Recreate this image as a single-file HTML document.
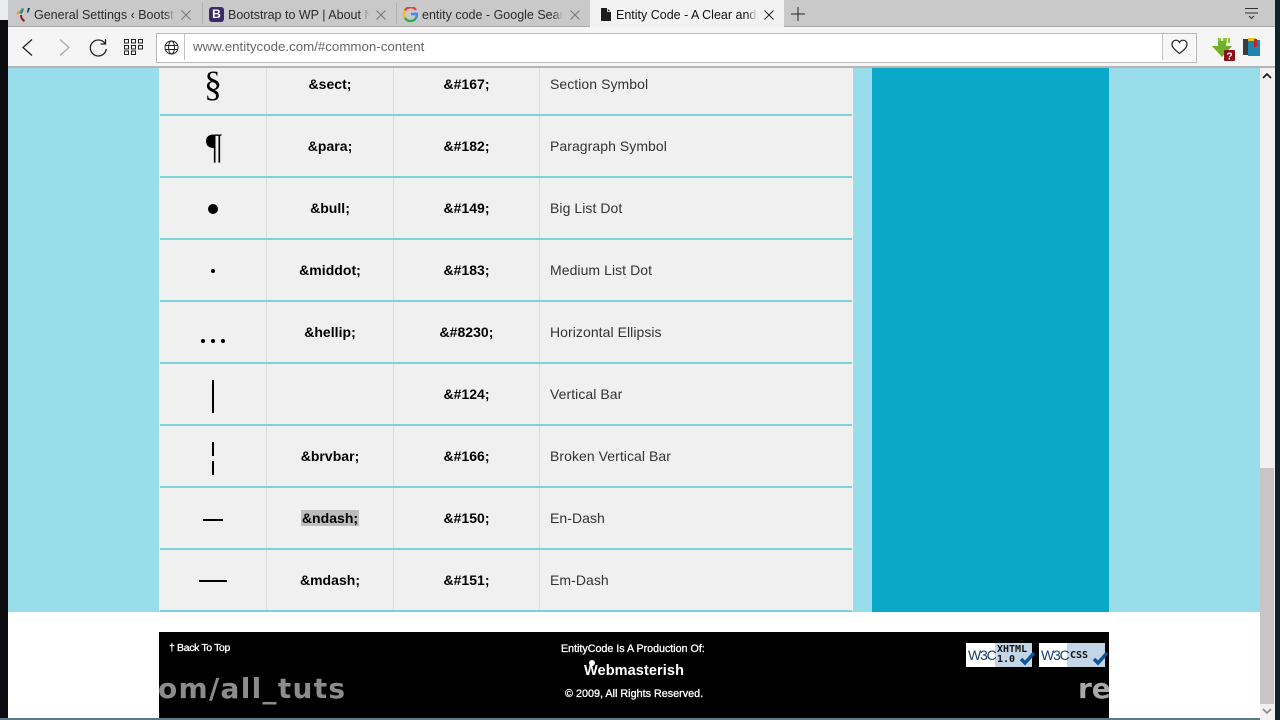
<!DOCTYPE html>
<html><head><meta charset="utf-8"><style>
html,body{margin:0;padding:0;background:#fff;width:1280px;height:720px;overflow:hidden;font-family:"Liberation Sans",sans-serif}
.a{position:absolute}
.t{position:absolute;white-space:nowrap}
.tab{position:absolute;top:0;height:28px;background:#c9c9c9}
.tt{position:absolute;top:7px;font-size:12.5px;line-height:16px;color:#2b2b2b;white-space:nowrap;overflow:hidden}
.fade{position:absolute;top:4px;width:10px;height:22px;background:linear-gradient(90deg,rgba(201,201,201,0),#c9c9c9)}
.b{position:absolute;font-weight:bold;font-size:14px;line-height:16px;color:#000;text-align:center;white-space:nowrap;letter-spacing:.03px}
.d{position:absolute;font-size:14px;line-height:16px;color:#333;left:550px;white-space:nowrap;letter-spacing:.06px}
.hl{position:absolute;left:160px;width:692px;height:2px;background:#7dd3dc}
.vl{position:absolute;top:68px;width:1px;height:543px;background:#dcdcdc}
.ft{position:absolute;color:#fff;font-size:10.7px;line-height:12px;white-space:nowrap;-webkit-text-stroke:.3px #fff}
</style></head><body>
<div class="a" style="left:0;top:0;width:1280px;height:720px;background:#fff"></div>
<div class="a" style="left:0;top:20px;width:8px;height:700px;background:#0c0c10"></div>
<div class="a" style="left:1275px;top:0;width:5px;height:720px;background:#10222a"></div>
<div class="a" style="left:0;top:0;width:8px;height:20px;background:#e8eef0"></div>
<!-- tab strip -->
<div class="a" style="left:8px;top:0;width:1267px;height:27px;background:#c9c9c9"></div>
<div class="a" style="left:8px;top:26px;width:1267px;height:1px;background:#a8a8a8"></div>
<div class="a" style="left:202px;top:3px;width:1px;height:21px;background:#b0b0b0"></div>
<div class="a" style="left:396px;top:3px;width:1px;height:21px;background:#b0b0b0"></div>
<div class="a" style="left:590px;top:0;width:194px;height:28px;background:#f2f2f2"></div>
<!-- favicons -->
<svg class="a" style="left:14px;top:5px" width="20" height="20" viewBox="0 0 20 20"><path d="M5 5 2 9l2 1 2-3z" fill="#e8a33c"/><path d="M8 3 5 8l3 1 2-5z" fill="#2a8a7a"/><path d="M6 10c0 3 1 5 4 7l1-2c-2-1-3-3-3-5z" fill="#8e1f2a"/><path d="M14 3l2 0-2 5-1-1z" fill="#16324f"/></svg>
<div class="a" style="left:209px;top:7px;width:15px;height:15px;border-radius:3px;background:#3d2a68;color:#fff;font:bold 12px/15px 'Liberation Sans',sans-serif;text-align:center">B</div>
<svg class="a" style="left:403px;top:7px" width="15" height="15" viewBox="0 0 15 15"><path d="M13 3A6.5 6.5 0 0 0 2 3.5" fill="none" stroke="#e94235" stroke-width="2.4"/><path d="M2 3.5A6.5 6.5 0 0 0 2 11" fill="none" stroke="#fbbc05" stroke-width="2.4"/><path d="M2 11A6.5 6.5 0 0 0 13 11" fill="none" stroke="#34a853" stroke-width="2.4"/><path d="M13 11C14 9.5 14 8.500 14 7H8" fill="none" stroke="#4285f4" stroke-width="2.4"/></svg>
<svg class="a" style="left:600px;top:8px" width="12" height="13" viewBox="0 0 12 13"><path d="M1 0h6l4 4v9H1z" fill="#1b1b1b"/><path d="M7.500 0v3.500H11" fill="none" stroke="#fff" stroke-width=".8"/></svg>
<!-- tab titles -->
<div class="tt" style="left:34px;width:141px">General Settings ‹ Bootstrap to WP</div><div class="fade" style="left:165px"></div>
<div class="tt" style="left:228px;width:141px">Bootstrap to WP | About Me</div><div class="fade" style="left:359px"></div>
<div class="tt" style="left:422px;width:141px">entity code - Google Search</div><div class="fade" style="left:553px"></div>
<div class="tt" style="left:616px;width:141px;color:#111">Entity Code - A Clear and Quick</div><div class="fade" style="left:747px;background:linear-gradient(90deg,rgba(242,242,242,0),#f2f2f2)"></div>
<!-- tab close -->
<svg class="a" style="left:180px;top:9px" width="12" height="12"><path d="M1.500 1.500l9 9M10.500 1.500l-9 9" stroke="#777" stroke-width="1" fill="none"/></svg>
<svg class="a" style="left:375px;top:9px" width="12" height="12"><path d="M1.500 1.500l9 9M10.500 1.500l-9 9" stroke="#777" stroke-width="1" fill="none"/></svg>
<svg class="a" style="left:569px;top:9px" width="12" height="12"><path d="M1.500 1.500l9 9M10.500 1.500l-9 9" stroke="#777" stroke-width="1" fill="none"/></svg>
<svg class="a" style="left:763px;top:9px" width="12" height="12"><path d="M1.500 1.500l9 9M10.500 1.500l-9 9" stroke="#222" stroke-width="1" fill="none"/></svg>
<svg class="a" style="left:791px;top:7px" width="14" height="14"><path d="M7 0v14M0 7h14" stroke="#222" stroke-width="1" fill="none"/></svg>
<svg class="a" style="left:1245px;top:7px" width="14" height="14"><path d="M0 1.500h13M0 6h13" stroke="#333" stroke-width="1" fill="none"/><path d="M4 9l2.500 2.500L9 9" stroke="#333" stroke-width="1" fill="none"/></svg>
<!-- toolbar -->
<div class="a" style="left:8px;top:27px;width:1267px;height:40px;background:#f5f5f5"></div>
<div class="a" style="left:8px;top:66px;width:1267px;height:2px;background:#b5b5b5"></div>
<svg class="a" style="left:20px;top:38px" width="14" height="19"><path d="M12 1.500 3 9.500l9 8" fill="none" stroke="#222" stroke-width="1.300"/></svg>
<svg class="a" style="left:58px;top:38px" width="14" height="19"><path d="M2 1.500l9 8-9 8" fill="none" stroke="#aaa" stroke-width="1.300"/></svg>
<svg class="a" style="left:89px;top:38px" width="19" height="19" viewBox="0 0 19 19"><path d="M16 5.500A8 8 0 1 0 17.300 11" fill="none" stroke="#222" stroke-width="1.300"/><path d="M16.500 1v5h-5" fill="none" stroke="#222" stroke-width="1.300"/></svg>
<svg class="a" style="left:124px;top:39px" width="19" height="16" fill="none" stroke="#222" stroke-width="1"><rect x=".5" y=".5" width="4" height="3.500"/><rect x="7.500" y=".5" width="4" height="3.500"/><rect x="14.500" y=".5" width="4" height="3.500"/><rect x=".5" y="6.500" width="4" height="3.500"/><rect x="7.500" y="6.500" width="4" height="3.500"/><rect x="14.500" y="6.500" width="4" height="3.500"/><rect x=".5" y="12" width="4" height="3.500"/><rect x="7.500" y="12" width="4" height="3.500"/></svg>
<div class="a" style="left:156px;top:33px;width:1039px;height:28px;background:#fff;border:1px solid #b8b8b8;box-sizing:content-box"></div>
<div class="a" style="left:184px;top:34px;width:1px;height:26px;background:#c4c4c4"></div>
<div class="a" style="left:1162px;top:34px;width:1px;height:26px;background:#c4c4c4"></div>
<div class="a" style="left:1163px;top:34px;width:32px;height:27px;background:#f7f7f7"></div>
<svg class="a" style="left:164px;top:40px" width="15" height="15" viewBox="0 0 15 15" fill="none" stroke="#222" stroke-width="1"><circle cx="7.500" cy="7.500" r="6.500"/><ellipse cx="7.500" cy="7.500" rx="3" ry="6.500"/><path d="M1 5.500h13M1 9.500h13"/></svg>
<div class="t" style="left:193px;top:39px;font-size:13.300px;line-height:16px;color:#666">www.entitycode.com/#common-content</div>
<svg class="a" style="left:1171px;top:39px" width="17" height="16" viewBox="0 0 17 16"><path d="M8.500 14.500C5 11.500 1 9 1 5.200 1 2.800 3 1.200 4.800 1.200c1.700 0 3 1 3.700 2.300.7-1.300 2-2.300 3.700-2.300C14 1.200 16 2.800 16 5.200c0 3.800-4 6.300-7.500 9.300z" fill="#fff" stroke="#222" stroke-width="1.200"/></svg>
<svg class="a" style="left:1212px;top:37px" width="26" height="25" viewBox="0 0 26 25"><path d="M6 1h3v5H6zM11 1h4v5h-4zM16 1h2v5h-2z" fill="#8cc63a"/><path d="M0 9h6V4h8v5h6L10 20z" fill="#6fb028"/><rect x="12" y="13" width="11" height="11" rx="1" fill="#8c0f1a"/><text x="17.500" y="22.500" font-family="Liberation Sans" font-weight="bold" font-size="10" fill="#fff" text-anchor="middle">?</text></svg>
<svg class="a" style="left:1243px;top:37px" width="18" height="20" viewBox="0 0 18 20"><rect x="0" y="2" width="6" height="16" fill="#3c3c3c"/><rect x="5" y="3" width="12" height="16" fill="#1b86b0"/><rect x="5" y="1" width="8" height="3" fill="#e8c020"/><rect x="11" y="2" width="3" height="8" fill="#c02525"/></svg>
<!-- page -->
<div class="a" style="left:8px;top:68px;width:1253px;height:544px;background:#98dde9"></div>
<div class="a" style="left:872px;top:68px;width:237px;height:544px;background:#0aa9c9"></div>
<div class="a" style="left:160px;top:68px;width:692px;height:543px;background:#f0f0f0"></div>
<div class="a" style="left:159px;top:68px;width:1px;height:543px;background:#f4f4f4"></div>
<div class="a" style="left:852px;top:68px;width:1px;height:543px;background:#f4f4f4"></div>
<div class="vl" style="left:266px"></div><div class="vl" style="left:393px"></div><div class="vl" style="left:539px"></div>
<div class="hl" style="top:114px"></div><div class="hl" style="top:176px"></div><div class="hl" style="top:238px"></div><div class="hl" style="top:300px"></div><div class="hl" style="top:362px"></div><div class="hl" style="top:424px"></div><div class="hl" style="top:486px"></div><div class="hl" style="top:548px"></div><div class="hl" style="top:610px"></div>
<!-- symbols -->
<div class="t" style="left:160px;width:106px;text-align:center;top:64px;font-family:'Liberation Serif',serif;font-size:36px;line-height:40px;color:#000">§</div>
<div class="t" style="left:161px;width:106px;text-align:center;top:126px;font-family:'Liberation Serif',serif;font-size:36px;line-height:40px;color:#000">¶</div>
<div class="a" style="left:208px;top:204px;width:10px;height:10px;border-radius:50%;background:#000"></div>
<div class="a" style="left:211px;top:269px;width:4px;height:4px;border-radius:50%;background:#000"></div>
<div class="a" style="left:201px;top:339px;width:4px;height:4px;border-radius:50%;background:#000"></div>
<div class="a" style="left:211px;top:339px;width:4px;height:4px;border-radius:50%;background:#000"></div>
<div class="a" style="left:221px;top:339px;width:4px;height:4px;border-radius:50%;background:#000"></div>
<div class="a" style="left:212px;top:380px;width:2px;height:33px;background:#000"></div>
<div class="a" style="left:212px;top:442px;width:2px;height:14px;background:#000"></div>
<div class="a" style="left:212px;top:461px;width:2px;height:14px;background:#000"></div>
<div class="a" style="left:203px;top:519px;width:20px;height:2px;background:#000"></div>
<div class="a" style="left:199px;top:580px;width:28px;height:2px;background:#000"></div>
<!-- names -->
<div class="b" style="left:267px;width:126px;top:76px">&amp;sect;</div>
<div class="b" style="left:267px;width:126px;top:138px">&amp;para;</div>
<div class="b" style="left:267px;width:126px;top:200px">&amp;bull;</div>
<div class="b" style="left:267px;width:126px;top:262px">&amp;middot;</div>
<div class="b" style="left:267px;width:126px;top:324px">&amp;hellip;</div>
<div class="b" style="left:267px;width:126px;top:448px">&amp;brvbar;</div>
<div class="a" style="left:301px;top:510px;width:58px;height:16px;background:#bdbdbd"></div>
<div class="b" style="left:267px;width:126px;top:510px">&amp;ndash;</div>
<div class="b" style="left:267px;width:126px;top:572px">&amp;mdash;</div>
<!-- codes -->
<div class="b" style="left:394px;width:145px;top:76px">&amp;#167;</div>
<div class="b" style="left:394px;width:145px;top:138px">&amp;#182;</div>
<div class="b" style="left:394px;width:145px;top:200px">&amp;#149;</div>
<div class="b" style="left:394px;width:145px;top:262px">&amp;#183;</div>
<div class="b" style="left:394px;width:145px;top:324px">&amp;#8230;</div>
<div class="b" style="left:394px;width:145px;top:386px">&amp;#124;</div>
<div class="b" style="left:394px;width:145px;top:448px">&amp;#166;</div>
<div class="b" style="left:394px;width:145px;top:510px">&amp;#150;</div>
<div class="b" style="left:394px;width:145px;top:572px">&amp;#151;</div>
<!-- desc -->
<div class="d" style="top:76px">Section Symbol</div>
<div class="d" style="top:138px">Paragraph Symbol</div>
<div class="d" style="top:200px">Big List Dot</div>
<div class="d" style="top:262px">Medium List Dot</div>
<div class="d" style="top:324px">Horizontal Ellipsis</div>
<div class="d" style="top:386px">Vertical Bar</div>
<div class="d" style="top:448px">Broken Vertical Bar</div>
<div class="d" style="top:510px">En-Dash</div>
<div class="d" style="top:572px">Em-Dash</div>
<!-- footer -->
<div class="a" style="left:159px;top:632px;width:950px;height:86px;background:#000;overflow:hidden">
<div class="t" style="left:-1px;top:39px;font-family:'DejaVu Sans',sans-serif;font-weight:bold;font-size:28px;line-height:36px;color:#8c8c8c;letter-spacing:1.300px">om/all_tuts</div>
<div class="t" style="left:919px;top:39px;font-family:'DejaVu Sans',sans-serif;font-weight:bold;font-size:28px;line-height:36px;color:#a8a8a8">re</div>
</div>
<div class="a" style="left:0;top:718px;width:1261px;height:2px;background:#5a7a88"></div>
<div class="ft" style="left:169px;top:642px;font-size:10.500px;letter-spacing:-.35px">† Back To Top</div>
<div class="ft" style="left:561px;top:643px">EntityCode Is A Production Of:</div>
<div class="ft" style="left:584px;top:662px;font-size:14.500px;line-height:16px;font-weight:bold;-webkit-text-stroke:0;letter-spacing:.1px;margin-top:1px">Webmasterish</div>
<div class="a" style="left:589px;top:660px;width:6px;height:6px;border-radius:50%;background:#fff"></div>
<div class="ft" style="left:565px;top:688px;font-size:10.800px">© 2009, All Rights Reserved.</div>
<!-- badges -->
<div class="a" style="left:966px;top:643px;width:66px;height:24px;background:#fff;overflow:hidden">
<div class="a" style="left:29px;top:0;width:37px;height:24px;background:#c3d5e6"></div>
<div class="t" style="left:2px;top:4px;font:14px/16px 'Liberation Sans',sans-serif;color:#1c3f6e;letter-spacing:-1.200px">W3C</div>
<div class="t" style="left:31px;top:2px;font:bold 10px/10px 'DejaVu Sans Mono',monospace;color:#111;letter-spacing:0">XHTML</div>
<div class="t" style="left:31px;top:12px;font:bold 10px/10px 'DejaVu Sans Mono',monospace;color:#111">1.0</div>
</div>
<svg class="a" style="left:1019px;top:650px" width="18" height="16"><path d="M2 9l4 4L15 3" fill="none" stroke="#0f5596" stroke-width="3.500"/></svg>
<div class="a" style="left:1039px;top:643px;width:66px;height:24px;background:#fff;overflow:hidden">
<div class="a" style="left:28px;top:0;width:38px;height:24px;background:#c3d5e6"></div>
<div class="t" style="left:2px;top:4px;font:14px/16px 'Liberation Sans',sans-serif;color:#1c3f6e;letter-spacing:-1.200px">W3C</div>
<div class="t" style="left:31px;top:8px;font:bold 10px/10px 'DejaVu Sans Mono',monospace;color:#111">CSS</div>
</div>
<svg class="a" style="left:1092px;top:650px" width="18" height="16"><path d="M2 9l4 4L15 3" fill="none" stroke="#0f5596" stroke-width="3.500"/></svg>
<!-- scrollbar -->
<div class="a" style="left:1260px;top:68px;width:15px;height:652px;background:#f3f0f1"></div>
<div class="a" style="left:1260px;top:468px;width:14px;height:236px;background:#c9c5c7"></div>
<svg class="a" style="left:1262px;top:72px" width="10" height="8"><path d="M1 6l4-4 4 4" fill="none" stroke="#111" stroke-width="1.600"/></svg>
<svg class="a" style="left:1262px;top:707px" width="10" height="8"><path d="M1 2l4 4 4-4" fill="none" stroke="#888" stroke-width="1.600"/></svg>
</body></html>
